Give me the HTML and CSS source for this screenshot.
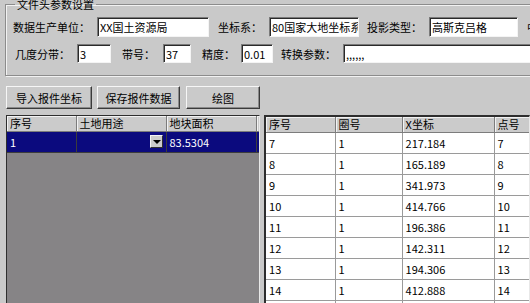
FILE: index.html
```html
<!DOCTYPE html>
<html lang="zh-CN">
<head>
    <meta charset="UTF-8">
    <title>文件头参数设置</title>
    <link rel="stylesheet" href="styles.css">
</head>
<body>
    <fieldset class="group">
        <legend>文件头参数设置</legend>
        <div class="row">
            <label class="lbl">数据生产单位：</label>
            <input class="txt w-unit" type="text" value="XX国土资源局">
            <label class="lbl ml9">坐标系：</label>
            <input class="txt w-crs" type="text" value="80国家大地坐标系">
            <label class="lbl ml8">投影类型：</label>
            <input class="txt w-proj" type="text" value="高斯克吕格">
            <label class="lbl ml9">中央经线：</label>
        </div>
        <div class="row row2">
            <label class="lbl first2">几度分带：</label>
            <input class="txt w-zone" type="text" value="3">
            <label class="lbl ml11">带号：</label>
            <input class="txt w-num" type="text" value="37">
            <label class="lbl ml11">精度：</label>
            <input class="txt w-prec" type="text" value="0.01">
            <label class="lbl ml8">转换参数：</label>
            <input class="txt w-param" type="text" value=",,,,,,">
        </div>
    </fieldset>

    <div class="toolbar">
        <button class="btn b1">导入报件坐标</button>
        <button class="btn b2">保存报件数据</button>
        <button class="btn b3">绘图</button>
    </div>

    <div class="panels">
        <div class="grid grid-left">
            <table>
                <colgroup>
                    <col style="width:69px"><col style="width:90px"><col style="width:90px"><col style="width:7px">
                </colgroup>
                <thead>
                    <tr><th>序号</th><th>土地用途</th><th>地块面积</th><th>地</th></tr>
                </thead>
                <tbody>
                    <tr class="sel">
                        <td>1</td>
                        <td class="combo"><span class="drop"><span class="arrow"></span></span></td>
                        <td>83.5304</td>
                        <td>地</td>
                    </tr>
                </tbody>
            </table>
        </div>
        <div class="grid grid-right">
            <table>
                <colgroup>
                    <col style="width:69px"><col style="width:67px"><col style="width:92px"><col style="width:36px">
                </colgroup>
                <thead>
                    <tr><th>序号</th><th>圈号</th><th>X坐标</th><th>点号</th></tr>
                </thead>
                <tbody>
                    <tr><td>7</td><td>1</td><td>217.184</td><td>7</td></tr>
                    <tr><td>8</td><td>1</td><td>165.189</td><td>8</td></tr>
                    <tr><td>9</td><td>1</td><td>341.973</td><td>9</td></tr>
                    <tr><td>10</td><td>1</td><td>414.766</td><td>10</td></tr>
                    <tr><td>11</td><td>1</td><td>196.386</td><td>11</td></tr>
                    <tr><td>12</td><td>1</td><td>142.311</td><td>12</td></tr>
                    <tr><td>13</td><td>1</td><td>194.306</td><td>13</td></tr>
                    <tr><td>14</td><td>1</td><td>412.888</td><td>14</td></tr>
                    <tr><td>15</td><td>1</td><td>301.520</td><td>15</td></tr>
                </tbody>
            </table>
        </div>
    </div>
</body>
</html>
```

FILE: styles.css
```css
body {
    margin: 0;
    padding: 0;
    width: 530px;
    height: 303px;
    overflow: hidden;
    background-color: #c9c9c9;
    font-family: "Noto Sans CJK SC", "Liberation Sans", sans-serif;
    font-size: 11px;
    color: #000;
}
.group {
    margin: -3px 0 0 5px;
    padding: 6px 0 12px 7px;
    width: 560px;
    border: 1px solid #8c8c8c;
    box-shadow: inset 1px 1px 0 #f2f2f2, 1px 1px 0 #f2f2f2;
}
.group legend {
    padding: 0 2px;
    margin-left: 2px;
    line-height: 14px;
    font-size: 11px;
}
.row {
    display: flex;
    align-items: center;
    height: 20px;
    white-space: nowrap;
}
.row2 {
    margin-top: 7px;
    height: 19px;
}
.lbl {
    line-height: 14px;
    flex: none;
}
.first2 { margin-left: 2px; }
.ml8 { margin-left: 8px; }
.ml9 { margin-left: 9px; }
.ml11 { margin-left: 11px; }
.txt {
    box-sizing: border-box;
    height: 100%;
    margin: 0 0 0 7px;
    padding: 0 0 0 2px;
    background: #fff;
    border: 1px solid;
    border-color: #7a7a7a #f4f4f4 #f4f4f4 #7a7a7a;
    box-shadow: inset 1px 1px 0 #2a2a2a;
    font-family: inherit;
    font-size: 11px;
    color: #000;
    outline: none;
    flex: none;
}
.w-unit { width: 112px; }
.w-crs { width: 90px; }
.w-proj { width: 89px; }
.w-zone { width: 34px; }
.w-num { width: 28px; margin-left: 8px; }
.w-prec { width: 32px; margin-left: 6px; }
.w-param { width: 200px; }
.toolbar {
    display: flex;
    margin: 10px 0 0 6px;
    height: 23px;
}
.btn {
    box-sizing: border-box;
    height: 23px;
    padding: 0;
    background: #cacaca;
    border: 1px solid;
    border-color: #f6f6f6 #3a3a3a #3a3a3a #f6f6f6;
    box-shadow: inset -1px -1px 0 #8a8a8a;
    font-family: inherit;
    font-size: 11px;
    color: #000;
}
.b1 { width: 86px; }
.b2 { width: 83px; margin-left: 5px; }
.b3 { width: 74px; margin-left: 6px; }
.panels {
    display: flex;
    margin: 6px 0 0 6px;
    height: 200px;
}
.grid {
    box-sizing: border-box;
    height: 100%;
    overflow: hidden;
    border: 1px solid;
    border-color: #2e2e2e #e8e8e8 #e8e8e8 #2e2e2e;
}
.grid-left {
    width: 258px;
    background: #868486;
}
.grid-right {
    width: 270px;
    margin-left: 4px;
    background: #fff;
    border-left: 2px solid #2e2e2e;
    border-top: 2px solid #2e2e2e;
}
table {
    border-collapse: collapse;
    table-layout: fixed;
    width: 256px;
}
.grid-right table { width: 264px; }
th, td {
    box-sizing: border-box;
    padding: 0 0 0 3px;
    text-align: left;
    font-weight: normal;
    white-space: nowrap;
    overflow: hidden;
}
th {
    height: 15px;
    line-height: 14px;
    font-size: 11px;
    background: #cbcbcb;
    border-right: 1px solid #7c7c7c;
    border-bottom: 1px solid #7c7c7c;
    box-shadow: inset 1px 1px 0 #f2f2f2;
}
td {
    height: 21px;
    line-height: 20px;
    border-right: 1px solid #9a9a9a;
    border-bottom: 1px solid #9a9a9a;
}
.grid-left td {
    border-color: #3c3c3c;
}
.sel td {
    background: #0b0a7e;
    color: #fff;
}
.combo {
    position: relative;
}
.drop {
    position: absolute;
    right: 3px;
    top: 3px;
    width: 13px;
    height: 13px;
    box-sizing: border-box;
    background: #cbcbcb;
    border: 1px solid;
    border-color: #f2f2f2 #303030 #303030 #f2f2f2;
}
.arrow {
    position: absolute;
    left: 2px;
    top: 4px;
    border-left: 4px solid transparent;
    border-right: 4px solid transparent;
    border-top: 4px solid #000;
}
```
